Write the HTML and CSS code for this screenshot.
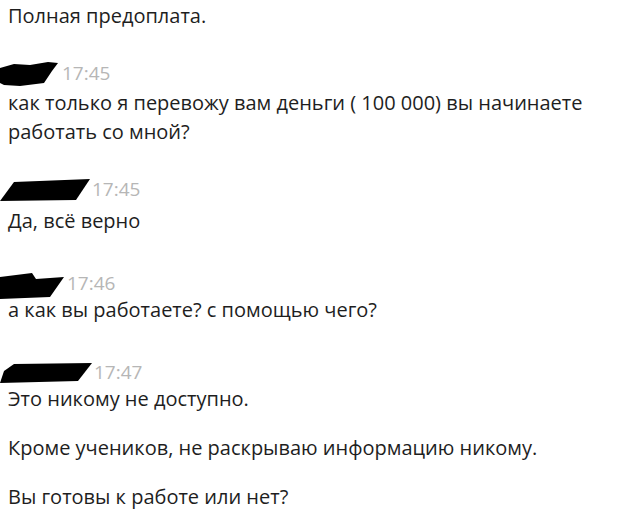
FILE: index.html
```html
<!DOCTYPE html>
<html lang="ru">
<head>
<meta charset="utf-8">
<link rel="stylesheet" href="styles.css">
</head>
<body>
<div class="chat">
  <p class="line first">Полная предоплата.</p>

  <div class="group g1">
    <div class="head">
      <svg class="blot" width="62" height="26" viewBox="0 0 62 26"><path d="M0 7 L14 3 L30 4 L48 1 L58 2 L52 10 L44 22 L20 25 L4 24 L0 22 Z" fill="#000"/></svg>
      <span class="time">17:45</span>
    </div>
    <p class="line">как только я перевожу вам деньги ( 100 000) вы начинаете работать со мной?</p>
  </div>

  <div class="group g2">
    <div class="head">
      <svg class="blot" width="92" height="26" viewBox="0 0 92 26"><path d="M14 5 L90 2 L76 23 L0 24 Z" fill="#000"/></svg>
      <span class="time">17:45</span>
    </div>
    <p class="line">Да, всё верно</p>
  </div>

  <div class="group g3">
    <div class="head">
      <svg class="blot" width="67" height="30" viewBox="0 0 67 30"><path d="M0 8 L32 4 L36 10 L64 8 L50 28 L0 30 Z" fill="#000"/></svg>
      <span class="time">17:46</span>
    </div>
    <p class="line">а как вы работаете? с помощью чего?</p>
  </div>

  <div class="group g4">
    <div class="head">
      <svg class="blot" width="94" height="24" viewBox="0 0 94 24"><path d="M14 3 L92 2 L78 20 L0 22 L4 10 Z" fill="#000"/></svg>
      <span class="time">17:47</span>
    </div>
    <p class="line">Это никому не доступно.</p>
    <p class="line para">Кроме учеников, не раскрываю информацию никому.</p>
    <p class="line para">Вы готовы к работе или нет?</p>
  </div>
</div>
</body>
</html>
```

FILE: styles.css
```css
html, body {
  margin: 0;
  padding: 0;
  background: #ffffff;
}

.chat {
  padding: 0 8px;
  font-family: "Open Sans", "Noto Sans", sans-serif;
  font-size: 20px;
  color: #1e1e1e;
  width: 604px;
}

.line {
  margin: 0;
  line-height: 29px;
}

.first {
  margin-top: 1px;
}

.group {
  margin-top: 29px;
}

.g2 .head + .line {
  margin-top: 2px;
}

.g3,
.g4 {
  margin-top: 34px;
}

.g3 .head + .line,
.g4 .head + .line {
  margin-top: -3px;
}

.head {
  display: flex;
  align-items: center;
  height: 29px;
  margin-left: -8px;
}

.blot {
  display: block;
  flex: none;
}

.time {
  color: #b6b6b6;
  font-size: 19px;
  line-height: 29px;
}

.para {
  margin-top: 20px;
}
```
